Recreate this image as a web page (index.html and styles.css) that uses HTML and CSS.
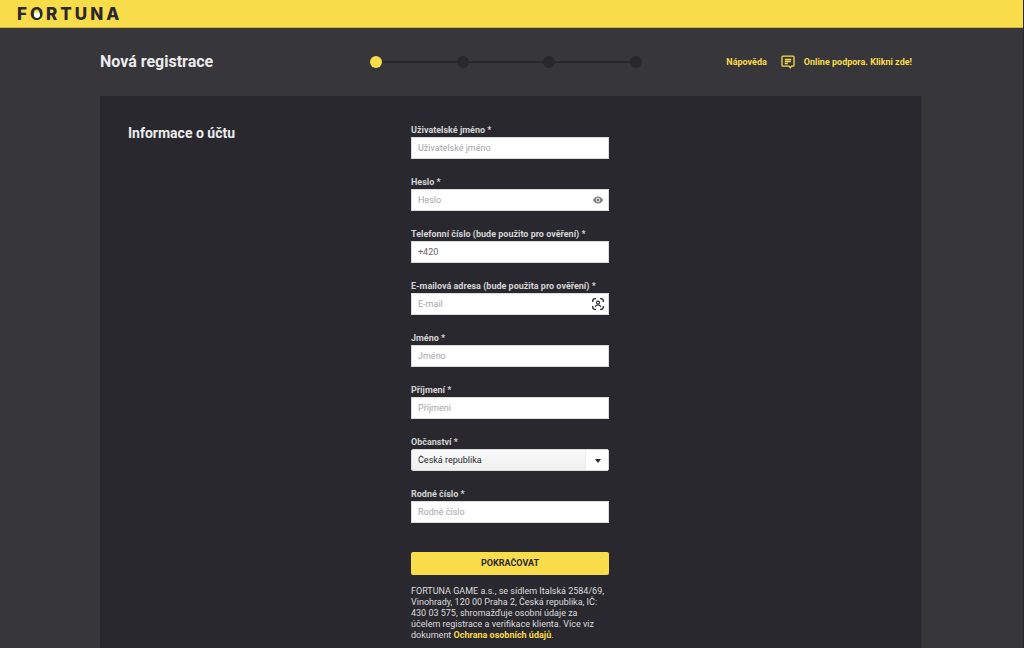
FILE: index.html
```
<!DOCTYPE html>
<html lang="cs">
<head>
    <meta charset="UTF-8">
    <meta name="viewport" content="width=device-width, initial-scale=1">
    <title>Nová registrace</title>
    <link rel="stylesheet" href="styles.css">
</head>
<body>
<header class="header">
    <a class="logo" href="#">F<span class="logo-o">O</span>RTUNA</a>
</header>

<div class="wrap">
    <div class="top">
        <h1>Nová registrace</h1>
        <ol class="steps" aria-label="Kroky registrace">
            <li class="active"></li>
            <li></li>
            <li></li>
            <li></li>
        </ol>
        <nav class="help">
            <a href="#">Nápověda</a>
            <a class="chat" href="#">
                <svg width="14" height="14" viewBox="0 0 14 14" fill="none" stroke="currentColor" stroke-width="1.3">
                    <path d="M2 1.2h10q1 0 1 1v8q0 1-1 1h-1.500L9.300 12.800 8 11.200H2q-1 0-1-1v-8q0-1 1-1z"/>
                    <path d="M3.800 4.500h6.500M3.800 6.500h6M3.800 8.500h3"/>
                </svg>
                Online podpora. Klikni zde!
            </a>
        </nav>
    </div>

    <main class="panel">
        <h2>Informace o účtu</h2>
        <form class="form">
            <div class="field">
                <label for="username">Uživatelské jméno *</label>
                <input type="text" id="username" placeholder="Uživatelské jméno">
            </div>
            <div class="field">
                <label for="password">Heslo *</label>
                <div class="box">
                    <input type="password" id="password" placeholder="Heslo">
                    <button class="icon" type="button" aria-label="Zobrazit heslo">
                        <svg width="10" height="8" viewBox="0 0 10 8">
                            <path d="M0 4Q2 .5 5 .5T10 4Q8 7.500 5 7.500T0 4z" fill="#75747a"/>
                            <circle cx="5" cy="4" r="1.900" fill="#75747a" stroke="#fff" stroke-width=".9"/>
                        </svg>
                    </button>
                </div>
            </div>
            <div class="field">
                <label for="phone">Telefonní číslo (bude použito pro ověření) *</label>
                <input type="tel" id="phone" value="+420">
            </div>
            <div class="field">
                <label for="email">E-mailová adresa (bude použita pro ověření) *</label>
                <div class="box">
                    <input type="email" id="email" placeholder="E-mail">
                    <button class="icon" type="button" aria-label="Vyplnit kontakt">
                        <svg width="12" height="12" viewBox="0 0 12 12" fill="none" stroke="#29282e" stroke-width="1.3">
                            <path d="M.7 4V3Q.7.7 3 .7h1M8 .7h1Q11.300.7 11.300 3v1M11.300 8v1q0 2.300-2.300 2.300H8M4 11.300H3Q.7 11.300.7 9V8"/>
                            <circle cx="6" cy="4.600" r="1.500" stroke-width="1.100"/>
                            <path d="M3.200 9Q3.600 6.900 6 6.900T8.800 9" stroke-width="1.100"/>
                        </svg>
                    </button>
                </div>
            </div>
            <div class="field">
                <label for="firstname">Jméno *</label>
                <input type="text" id="firstname" placeholder="Jméno">
            </div>
            <div class="field">
                <label for="lastname">Příjmení *</label>
                <input type="text" id="lastname" placeholder="Příjmení">
            </div>
            <div class="field">
                <label for="country">Občanství *</label>
                <div class="box select">
                    <select id="country">
                        <option>Česká republika</option>
                    </select>
                </div>
            </div>
            <div class="field">
                <label for="rc">Rodné číslo *</label>
                <input type="text" id="rc" placeholder="Rodné číslo">
            </div>
            <button class="btn" type="submit">POKRAČOVAT</button>
            <p class="note">FORTUNA GAME a.s., se sídlem Italská 2584/69, Vinohrady, 120 00 Praha 2, Česká republika, IČ: 430 03 575, shromažďuje osobní údaje za účelem registrace a verifikace klienta. Více viz dokument <a href="#">Ochrana osobních údajů</a>.</p>
        </form>
    </main>
</div>
</body>
</html>
```
FILE: styles.css
```
*{
    box-sizing: border-box;
}
body{
    display: flex;
    flex-direction: column;
    min-height: 100vh;
    margin: 0;
    font: 9px/11px Roboto, "Liberation Sans", sans-serif;
    color: #dcdcdd;
    background-color: #37363b;
    border-right: 1px solid #29282e;
}
a{
    color: #f9dc4a;
    font-weight: bold;
    text-decoration: none;
}
h1, h2{
    margin: 0;
    font-weight: bold;
    color: #ececec;
}
h1{
    font-size: 16px;
    line-height: 20px;
}
h2{
    width: 283px;
    font-size: 14px;
    line-height: 16px;
}

.header{
    display: flex;
    align-items: center;
    height: 28px;
    padding-left: 17px;
    background-color: #f9dc4a;
    border-bottom: 1px solid #cdb443;
}
.logo{
    font: 800 17px/20px Inter, sans-serif;
    letter-spacing: 3px;
    color: #29282e;
}
.logo-o{
    position: relative;
}
/* white ball inside the O */
.logo-o::after{
    content: "";
    position: absolute;
    top: 8px;
    left: 4px;
    width: 6px;
    height: 6px;
    border-radius: 50%;
    background-color: #fff;
}

.wrap{
    flex: 1;
    display: flex;
    flex-direction: column;
    padding: 0 102px 0 100px;
}
.top{
    display: flex;
    align-items: center;
    height: 68px;
}
.top h1{
    width: 270px;
}

.steps{
    display: flex;
    justify-content: space-between;
    width: 272px;
    margin: 0;
    padding: 0;
    list-style: none;
    background: linear-gradient(#29282e, #29282e) center / 100% 2px no-repeat;
}
.steps li{
    width: 12px;
    height: 12px;
    border-radius: 50%;
    background-color: #29282e;
}
.steps .active{
    background-color: #f9dc4a;
}

.help{
    display: flex;
    align-items: center;
    gap: 14px;
    margin-left: auto;
    margin-right: 9px;
}
.chat{
    display: flex;
    align-items: center;
    gap: 9px;
}

.panel{
    flex: 1;
    display: flex;
    align-items: flex-start;
    padding: 29px 28px 8px;
    background-color: #29282e;
}
.form{
    width: 198px;
}
.field{
    margin-bottom: 18px;
}
.field label{
    display: block;
    height: 12px;
    font-weight: bold;
    color: #d4d4d5;
}
input, select{
    display: block;
    width: 100%;
    height: 22px;
    padding: 0 6px;
    font: inherit;
    color: #66656a;
    background-color: #fff;
    border: 1px solid #dcdcdd;
    border-radius: 0;
}
input::placeholder{
    color: #a5a5a8;
}
.box{
    position: relative;
}
.icon{
    position: absolute;
    top: 0;
    right: 0;
    display: flex;
    align-items: center;
    justify-content: center;
    width: 22px;
    height: 22px;
    padding: 0;
    background: none;
    border: 0;
}
select{
    appearance: none;
    color: #29282e;
    background: linear-gradient(#fafafa, #efefef);
    border-radius: 2px;
}
.select::after{
    content: "";
    position: absolute;
    top: 1px;
    right: 1px;
    width: 22px;
    height: 20px;
    background-color: #fff;
    border-left: 1px solid #ececec;
    pointer-events: none;
}
.select::before{
    content: "";
    position: absolute;
    z-index: 1;
    top: 10px;
    right: 8px;
    border: 3px solid transparent;
    border-top: 4px solid #29282e;
    border-bottom: 0;
    pointer-events: none;
}

.btn{
    width: 100%;
    height: 23px;
    margin-top: 11px;
    font: bold 9px/11px Roboto, "Liberation Sans", sans-serif;
    color: #29282e;
    background-color: #f9dc4a;
    border: 0;
    border-radius: 2px;
}
.note{
    margin: 11px 0 0;
}
```
